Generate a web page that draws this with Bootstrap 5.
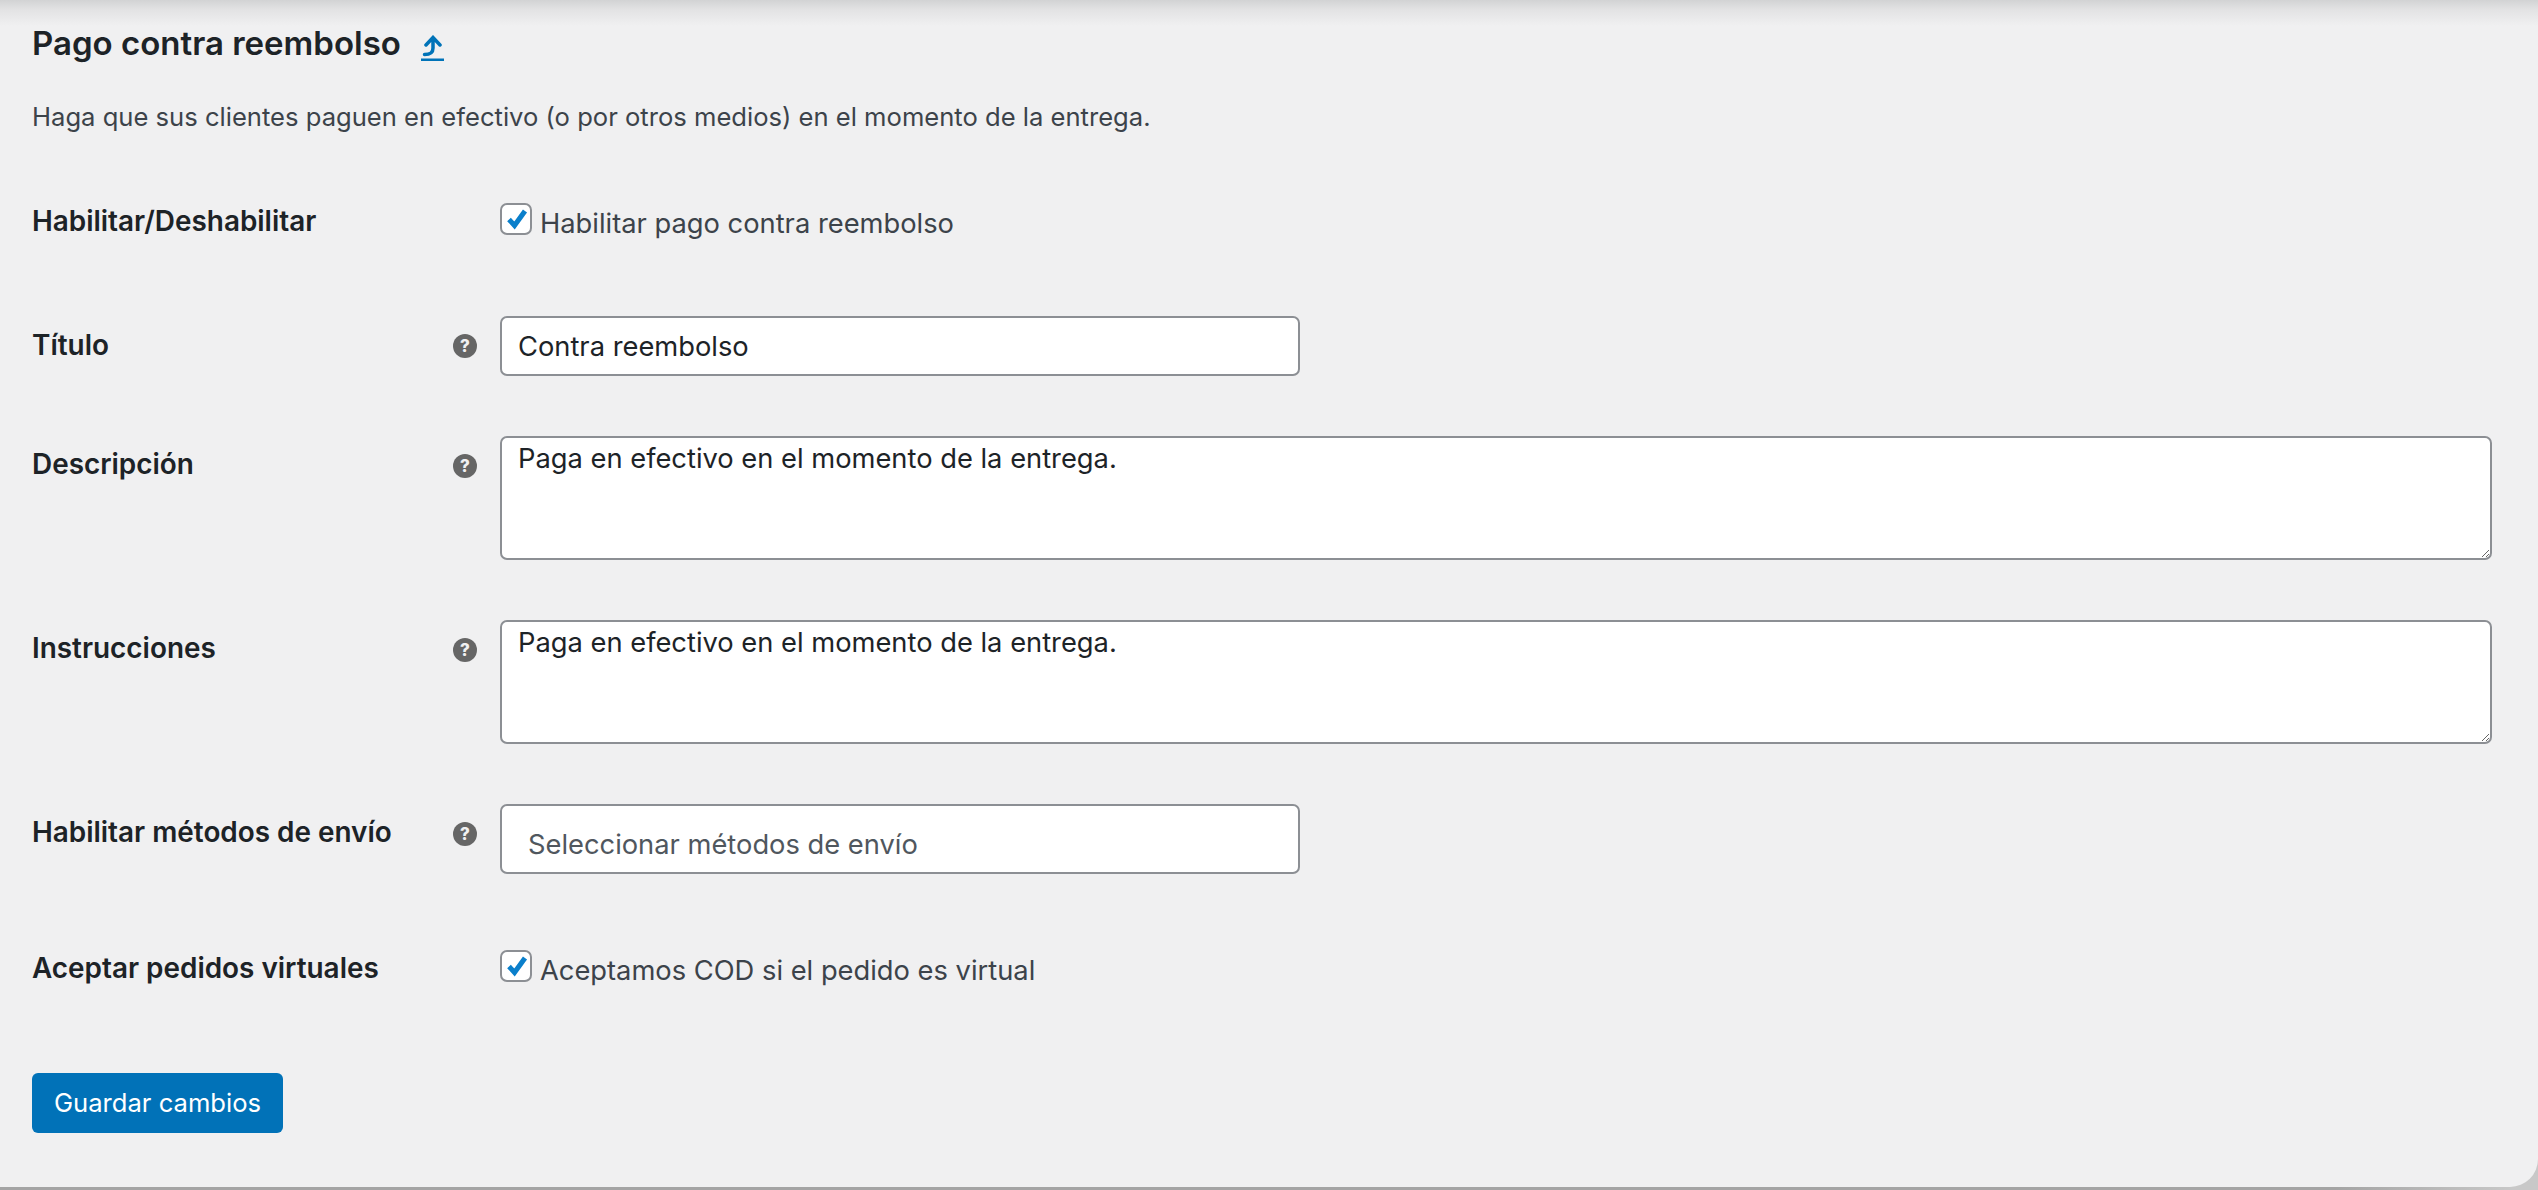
<!DOCTYPE html>
<html lang="es">
<head>
<meta charset="utf-8">
<title>Pago contra reembolso</title>
<link href="https://cdn.jsdelivr.net/npm/bootstrap@5.3.0/dist/css/bootstrap.min.css" rel="stylesheet">
<style>
html,body{height:100%;}
body{background:linear-gradient(to right,#a4a4a4 92%,#c8c8c8 99%);font-family:Inter,"Liberation Sans",sans-serif;color:#3c434a;font-size:27.3px;line-height:1.3;overflow:hidden;margin:0;}
.wc-panel{height:1187px;background:linear-gradient(#d2d3d4 0,#e3e3e4 10px,#f0f0f1 26px);border-radius:0 0 28px 0;padding:0 46px 0 32px;box-sizing:content-box;width:2460px;}
.wc-title{font-size:33px;font-weight:600;color:#1d2327;margin:0;line-height:40px;padding-top:22px;height:64px;}
.wc-up{color:#0073b8;margin-left:20px;display:inline-block;line-height:0;margin-top:9px;}
.wc-lead{margin:0;margin-top:33px;line-height:40px;height:40px;font-size:25.6px;}
.wc-row{display:flex;align-items:flex-start;}
.wc-label{width:421px;flex:none;font-weight:600;color:#1d2327;font-size:27.9px;line-height:36px;}
.wc-help{width:47px;flex:none;display:flex;padding-top:18px;}
.wc-dot{width:24px;height:24px;border-radius:50%;background:#666;color:#f0f0f1;font-size:17px;font-weight:800;line-height:24px;text-align:center;}
.wc-field{flex:1 1 auto;min-width:0;}
.wc-input{width:800px;height:60px;padding:0 16px;font-size:27.3px;color:#1d2327;border:2px solid #8c8f94;border-radius:7px;background:#fff;}
.wc-area{width:100%;height:124px;padding:4px 16px;font-size:27.3px;line-height:34px;color:#1d2327;border:2px solid #8c8f94;border-radius:7px;background:#fff;display:block;resize:vertical;}
.wc-input.ph{height:70px;padding-left:26px;padding-top:10px;}
.wc-input.ph::placeholder{color:#50575e;opacity:1;}
.wc-check{display:flex;align-items:flex-start;margin:0;font-size:27.3px;color:#3c434a;line-height:36px;}
.wc-check .form-check-input{width:32px;height:32px;margin:0 8px 0 0;flex:none;border:2px solid #8c8f94;border-radius:7px;background-color:#fff;background-size:26px 26px;background-position:center;opacity:1;}
.wc-check .form-check-input:checked{background-color:#fff;border-color:#8c8f94;background-image:url("data:image/svg+xml,%3csvg xmlns='http://www.w3.org/2000/svg' viewBox='0 0 26 26'%3e%3cpath fill='none' stroke='%230a7fcb' stroke-width='5' d='M6 13.500l5.500 6L22 5'/%3e%3c/svg%3e");}
.wc-check span{padding-top:3px;}
.wc-save{background:#0172b8;border:0;color:#fff;font-size:25.6px;line-height:60px;height:60px;padding:0;width:251px;border-radius:6px;font-weight:400;}
.wc-save:hover{background:#0172b8;color:#fff;}
.r1{margin-top:66px;height:36px;}
.r2{margin-top:77px;}
.r3{margin-top:60px;}
.r4{margin-top:60px;}
.r5{margin-top:60px;}
.r6{margin-top:76px;}
.wc-actions{margin-top:84px;}
.r2 .wc-label{padding-top:11px;}
.r3 .wc-label,.r4 .wc-label,.r5 .wc-label{padding-top:10px;}
</style>
</head>
<body>
<main class="wc-panel">
  <h2 class="wc-title d-flex align-items-center">Pago contra reembolso
    <a class="wc-up" href="#" aria-label="Volver"><svg width="23" height="26" viewBox="0 0 23 26"><path fill="none" stroke="currentColor" stroke-width="3.500" stroke-linecap="round" d="M3.500 19.500C9 19.500 12 18 12 13V3M5 10L12 2.500l7 7.500"/><path fill="currentColor" d="M0 23.500h23v2.500H0z"/></svg></a>
  </h2>
  <p class="wc-lead">Haga que sus clientes paguen en efectivo (o por otros medios) en el momento de la entrega.</p>

  <div class="wc-row r1">
    <div class="wc-label">Habilitar/Deshabilitar</div>
    <div class="wc-help"></div>
    <div class="wc-field"><label class="wc-check"><input class="form-check-input" type="checkbox" checked><span>Habilitar pago contra reembolso</span></label></div>
  </div>

  <div class="wc-row r2">
    <div class="wc-label">Título</div>
    <div class="wc-help"><span class="wc-dot">?</span></div>
    <div class="wc-field"><input class="form-control wc-input" type="text" value="Contra reembolso"></div>
  </div>

  <div class="wc-row r3">
    <div class="wc-label">Descripción</div>
    <div class="wc-help"><span class="wc-dot">?</span></div>
    <div class="wc-field"><textarea class="form-control wc-area">Paga en efectivo en el momento de la entrega.</textarea></div>
  </div>

  <div class="wc-row r4">
    <div class="wc-label">Instrucciones</div>
    <div class="wc-help"><span class="wc-dot">?</span></div>
    <div class="wc-field"><textarea class="form-control wc-area">Paga en efectivo en el momento de la entrega.</textarea></div>
  </div>

  <div class="wc-row r5">
    <div class="wc-label">Habilitar métodos de envío</div>
    <div class="wc-help"><span class="wc-dot">?</span></div>
    <div class="wc-field"><input class="form-control wc-input ph" type="text" placeholder="Seleccionar métodos de envío"></div>
  </div>

  <div class="wc-row r6">
    <div class="wc-label">Aceptar pedidos virtuales</div>
    <div class="wc-help"></div>
    <div class="wc-field"><label class="wc-check"><input class="form-check-input" type="checkbox" checked><span>Aceptamos COD si el pedido es virtual</span></label></div>
  </div>

  <div class="wc-actions"><button class="btn wc-save" type="button">Guardar cambios</button></div>
</main>
<script src="https://cdn.jsdelivr.net/npm/bootstrap@5.3.0/dist/js/bootstrap.bundle.min.js"></script>
</body>
</html>
